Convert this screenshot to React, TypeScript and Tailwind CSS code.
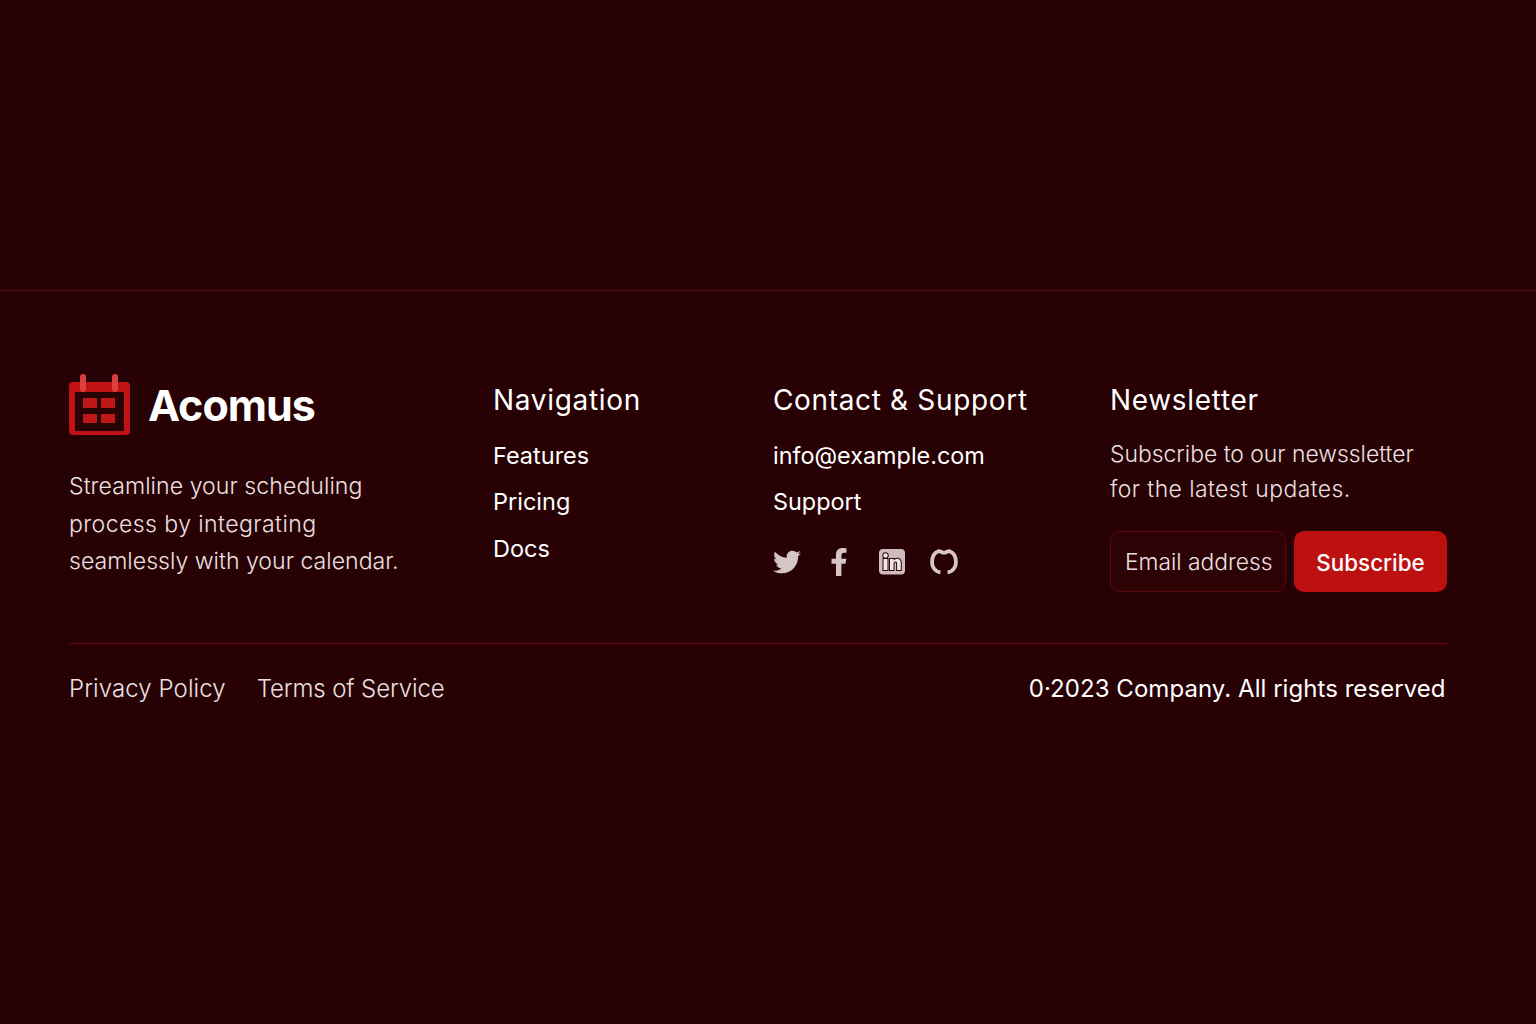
import { FaTwitter, FaFacebookF } from "react-icons/fa";

const navLinks = ["Features", "Pricing", "Docs"];

function CalendarLogo() {
  return (
    <svg width="62" height="62" viewBox="0 0 62 62" className="shrink-0">
      <rect x="0" y="8" width="61" height="53" rx="4" fill="#c01212" />
      <rect x="6" y="18" width="49" height="39" fill="#280204" />
      <rect x="11" y="0" width="6" height="18" rx="3" fill="#d8403f" />
      <rect x="43" y="0" width="6" height="18" rx="3" fill="#d8403f" />
      <rect x="14" y="24" width="14" height="10" fill="#c01818" />
      <rect x="32" y="24" width="14" height="10" fill="#c01818" />
      <rect x="14" y="40" width="14" height="9" fill="#c01818" />
      <rect x="32" y="40" width="14" height="9" fill="#c01818" />
    </svg>
  );
}

function LinkedinIcon() {
  return (
    <svg width="28" height="28" viewBox="0 0 28 28">
      <rect x="1" y="1" width="26" height="25.500" rx="4" fill="#cfbbbe" />
      <g fill="#efe6e7" stroke="#2c0508" strokeWidth="2" paintOrder="stroke">
        <rect x="5.500" y="11" width="4" height="11" />
        <circle cx="7.500" cy="7.500" r="2.200" />
        <path d="M12 11h3.600v1.700c.8-1.300 2-2 3.500-2 2.600 0 3.700 1.700 3.700 4.500V22h-3.700v-6.200c0-1.500-.5-2.300-1.600-2.300-1.300 0-2 .9-2 2.400V22H12z" />
      </g>
    </svg>
  );
}

function GithubRing() {
  return (
    <svg width="28" height="28" viewBox="0 0 28 28" fill="none">
      <path
        d="M10.500 24.500C5 23.500 2 19 2 14.500 2 9 4.500 4.500 8.500 3.200 10.500 2.800 12 4.800 14 4.800s3.500-2 5.500-1.600C23.500 4.500 26 9 26 14.500c0 4.500-3 9-8.500 10"
        stroke="#d6c4c6"
        strokeWidth="3.800"
      />
    </svg>
  );
}

export default function App() {
  return (
    <div className="min-h-screen bg-[#270103] font-['Inter',sans-serif] text-white">
      <div className="h-[290px]" />
      <footer className="border-t border-[#5a0a0c] pl-[69px] pr-[89px] pt-[83px]">
        <div className="grid grid-cols-[424px_280px_337px_337px]">
          <div>
            <div className="flex items-center gap-[17px]">
              <CalendarLogo />
              <span className="text-[43px] leading-none font-bold tracking-[-1px]">Acomus</span>
            </div>
            <p className="mt-[32px] text-[23.100px] leading-[37.500px] font-light text-[#ebe0e1]">
              <span className="tracking-[0.05px]">Streamline your scheduling</span>
              <br />
              <span className="tracking-[0.4px]">process by integrating</span>
              <br />
              seamlessly with your calendar.
            </p>
          </div>

          <div className="pt-[8px]">
            <h3 className="text-[28px] leading-[36px] font-normal tracking-[0.68px]">Navigation</h3>
            <ul className="mt-[20px] flex flex-col gap-[11px] text-[23.500px] leading-[35.300px]">
              {navLinks.map((l) => (
                <li key={l}>{l}</li>
              ))}
            </ul>
          </div>

          <div className="pt-[8px]">
            <h3 className="text-[28px] leading-[36px] font-normal tracking-[0.66px]">Contact &amp; Support</h3>
            <ul className="mt-[20px] flex flex-col gap-[11px] text-[23.400px] leading-[35.300px]">
              <li>info@example.com</li>
              <li>Support</li>
            </ul>
            <div className="mt-[28.500px] -ml-[0.5px] flex items-center gap-[24.500px] text-[#d6c4c6]">
              <FaTwitter size={28} />
              <FaFacebookF size={28} />
              <LinkedinIcon />
              <GithubRing />
            </div>
          </div>

          <div className="pt-[8px]">
            <h3 className="text-[28px] leading-[36px] font-normal tracking-[0.68px]">Newsletter</h3>
            <p className="mt-[19px] text-[22.900px] leading-[35px] font-light text-[#ebe0e1]">
              Subscribe to our newssletter
              <br />
              <span className="tracking-[0.45px]">for the latest updates.</span>
            </p>
            <div className="mt-[24px] flex gap-[8px]">
              <div className="flex h-[61px] w-[176px] items-center rounded-[10px] border border-[#5a0a0c] bg-[#2c0204] pl-[14px] pt-[2px] text-[22.800px] font-light text-[#ebe0e1] whitespace-nowrap">
                Email address
              </div>
              <button className="h-[61px] w-[153px] rounded-[10px] bg-[#bd1010] pt-[2px] text-[22.400px] font-medium text-white">
                Subscribe
              </button>
            </div>
          </div>
        </div>

        <div className="mt-[51px] flex items-center justify-between border-t border-[#6e0a0c] pt-[27px] text-[24px] leading-[36px]">
          <div className="flex gap-[31px] font-light text-[#ebe0e1]">
            <span className="tracking-[0.08px]">Privacy Policy</span>
            <span className="tracking-[-0.12px]">Terms of Service</span>
          </div>
          <span className="pr-[1.500px] tracking-[0.05px]">0·2023 Company. All rights reserved</span>
        </div>
      </footer>
    </div>
  );
}
